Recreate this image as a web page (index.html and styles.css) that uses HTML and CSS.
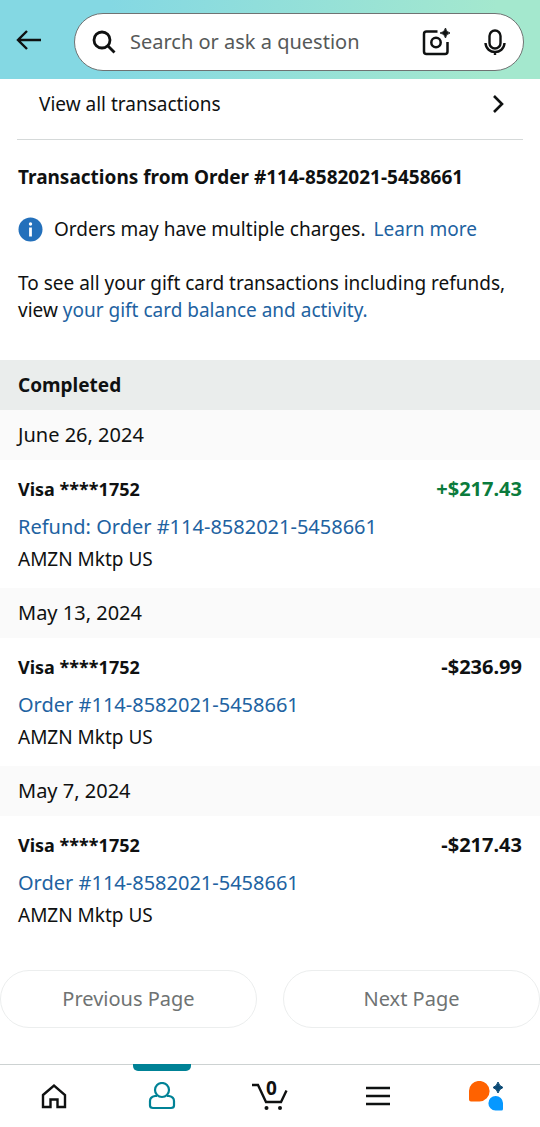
FILE: index.html
```html
<!DOCTYPE html>
<html lang="en">
<head>
<meta charset="utf-8">
<meta name="viewport" content="width=device-width, initial-scale=1">
<title>Transactions</title>
<link rel="stylesheet" href="styles.css">
</head>
<body>
<header class="topbar">
  <button class="icon-btn back" type="button" aria-label="Back">
    <svg width="26" height="22" viewBox="0 0 26 22" fill="none" stroke="#0f1111" stroke-width="2.4"><path d="M25 11H2M11 2L2 11l9 9"/></svg>
  </button>
  <form class="search">
    <svg width="24" height="24" viewBox="0 0 24 24" fill="none" stroke="#0f1111" stroke-width="2.8"><circle cx="10" cy="10" r="8"/><path d="M15.500 15.500L22.500 22.500"/></svg>
    <input class="search-input" type="text" aria-label="Search" placeholder="Search or ask a question">
    <button class="icon-btn" type="button" aria-label="Camera search">
      <svg width="28" height="28" viewBox="0 0 28 28" fill="none" stroke="#0f1111" stroke-width="2.500"><path d="M15.500 3.500H4.500Q2 3.500 2 6V23.500Q2 26 4.500 26H23Q25.500 26 25.500 23.500V14"/><circle cx="14" cy="14.500" r="4.700"/><path d="M23.500 0Q24 4.500 28.500 5Q24 5.500 23.500 10Q22.500 5.500 18 5Q22.500 4.500 23.500 0Z" fill="#0f1111" stroke="#0f1111" stroke-width=".8"/></svg>
    </button>
    <button class="icon-btn" type="button" aria-label="Voice search">
      <svg width="22" height="26" viewBox="0 0 22 26" fill="none" stroke="#0f1111" stroke-width="2.400"><rect x="5.500" y="1.500" width="11" height="18" rx="5.500"/><path d="M1.500 14C2 26 20 26 20.500 14M11 22.500V26"/></svg>
    </button>
  </form>
</header>
<main>
  <a class="view-all" href="#all">View all transactions
    <svg width="12" height="18" viewBox="0 0 12 18" fill="none" stroke="#0f1111" stroke-width="2.600"><path d="M2 1l8 8-8 8"/></svg>
  </a>
  <section class="intro">
    <h1 class="title">Transactions from Order #114-8582021-5458661</h1>
    <p class="notice">
      <svg class="info" width="25" height="25" viewBox="0 0 25 25"><circle cx="12.500" cy="12.500" r="12" fill="#2370bb"/><circle cx="12.500" cy="7" r="1.700" fill="#fff"/><path d="M12.500 10.500V19.500" stroke="#fff" stroke-width="2.800"/></svg>
      <span>Orders may have multiple charges.</span>
      <a class="link" href="#learn">Learn more</a>
    </p>
    <p class="gift">To see all your gift card transactions including refunds, view <a class="link" href="#balance">your gift card balance and activity.</a></p>
  </section>
  <h2 class="status">Completed</h2>
  <section>
    <h3 class="date">June 26, 2024</h3>
    <div class="entry">
      <div class="payment"><span class="card">Visa ****1752</span><span class="credit">+$217.43</span></div>
      <a class="link" href="#o1">Refund: Order #114-8582021-5458661</a>
      <p class="merchant">AMZN Mktp US</p>
    </div>
  </section>
  <section>
    <h3 class="date">May 13, 2024</h3>
    <div class="entry">
      <div class="payment"><span class="card">Visa ****1752</span><span>-$236.99</span></div>
      <a class="link" href="#o2">Order #114-8582021-5458661</a>
      <p class="merchant">AMZN Mktp US</p>
    </div>
  </section>
  <section>
    <h3 class="date">May 7, 2024</h3>
    <div class="entry">
      <div class="payment"><span class="card">Visa ****1752</span><span>-$217.43</span></div>
      <a class="link" href="#o3">Order #114-8582021-5458661</a>
      <p class="merchant">AMZN Mktp US</p>
    </div>
  </section>
  <div class="pager">
    <button class="page-btn" type="button" disabled>Previous Page</button>
    <button class="page-btn" type="button" disabled>Next Page</button>
  </div>
</main>
<nav class="tabs" aria-label="Main">
  <a class="tab" href="#home" aria-label="Home">
    <svg width="26" height="26" viewBox="0 0 26 26" fill="none" stroke="#0f1111" stroke-width="2.400"><path d="M2 12L13 2.500l11 9.500V24H16.500V16.500H9.500V24H2Z"/></svg>
  </a>
  <a class="tab active" href="#account" aria-label="Account">
    <svg width="28" height="28" viewBox="0 0 28 28" fill="none" stroke="#008296" stroke-width="2.200"><path d="M9 14H7Q2 15 2 19V23.500Q2 26 5 26H23Q26 26 26 23.500V19Q26 15 21 14H19"/><circle cx="14" cy="8" r="7"/></svg>
  </a>
  <a class="tab" href="#cart" aria-label="Cart, 0 items">
    <svg width="36" height="28" viewBox="0 0 36 28" fill="none" stroke="#0f1111" stroke-width="2.400"><path d="M0 3H6L14 20H29L34.500 8.500"/><circle cx="14.500" cy="26" r="2" fill="#0f1111" stroke="none"/><circle cx="28" cy="26" r="2" fill="#0f1111" stroke="none"/></svg>
    <span class="count">0</span>
  </a>
  <a class="tab" href="#menu" aria-label="Menu">
    <svg width="26" height="22" viewBox="0 0 26 22" stroke="#0f1111" stroke-width="2.400"><path d="M1 3H25M1 11H25M1 19H25"/></svg>
  </a>
  <a class="tab" href="#assistant" aria-label="Assistant">
    <svg width="34" height="30" viewBox="0 0 34 30"><path d="M0 10.500A10.300 10.300 0 1 1 10.500 20.500H2Q0 20.500 0 18.500Z" fill="#ff6200"/><path d="M34 22A7.300 7.300 0 1 0 26.500 29.500H32.500Q34 29.500 34 28Z" fill="#0698ff"/><path d="M29 1Q30 5 34 6.500Q30 8 29 12Q28 8 24 6.500Q28 5 29 1Z" fill="#0b4a75" stroke="#0b4a75"/></svg>
  </a>
</nav>
</body>
</html>
```

FILE: styles.css
```css
* { box-sizing: border-box; }
body {
  margin: 0;
  min-height: 100vh;
  display: flex;
  flex-direction: column;
  background: #fff;
  color: #0f1111;
  font-family: "Noto Sans", "Open Sans", sans-serif;
  font-size: 20px;
  line-height: 26px;
}
h1, h2, h3, p { margin: 0; font-size: inherit; }
a { color: inherit; text-decoration: none; }
svg { display: block; flex: none; }
.link { color: #2162a1; }
.icon-btn { padding: 0; border: 0; background: none; }
.back { padding-bottom: 4px; }
.topbar {
  display: flex;
  align-items: center;
  gap: 32px;
  padding: 13px 16px 8px;
  background: linear-gradient(100deg, #84d8e3 20%, #a4e8ce 90%);
}
.search {
  flex: 1;
  min-width: 0;
  height: 58px;
  display: flex;
  align-items: center;
  gap: 34px;
  padding: 0 17px;
  border: 1px solid #6f7373;
  border-radius: 29px;
  background: #fff;
}
.search-input {
  flex: 1;
  min-width: 0;
  margin-left: -20px;
  padding: 0;
  border: 0;
  outline: 0;
  background: none;
  font: inherit;
}
.search-input::placeholder { color: #565959; opacity: 1; }
.view-all {
  display: flex;
  align-items: center;
  justify-content: space-between;
  margin: 0 17px;
  padding: 12px 19px 22px 22px;
  border-bottom: 1px solid #d5d9d9;
  font-size: 19px;
}
.intro { padding: 24px 18px 36px; font-size: 19px; }
.notice { display: flex; align-items: center; gap: 8px; margin: 26px 0 28px; }
.info { margin-right: 3px; }
.gift { line-height: 27px; }
.status { padding: 12px 18px; background: #eaedec; font-size: 19px; }
.date { padding: 12px 18px; background: #fafafa; font-weight: 400; }
.entry { padding: 16px 18px; }
.payment {
  display: flex;
  justify-content: space-between;
  margin-bottom: 12px;
  font-weight: 700;
}
.card { font-size: 18px; }
.credit { color: #0b7b3c; }
.merchant { margin-top: 6px; font-size: 19px; }
.pager {
  display: grid;
  grid-template-columns: 1fr 1fr;
  gap: 26px;
  padding: 26px 0 36px;
}
.page-btn {
  height: 58px;
  border: 1px solid #eceeee;
  border-radius: 29px;
  background: #fff;
  color: #6f7373;
  font: inherit;
}
.tabs {
  flex: 1;
  display: grid;
  grid-template-columns: repeat(5, 1fr);
  border-top: 1px solid #cdd2d2;
}
.tab { position: relative; display: flex; align-items: center; justify-content: center; }
.active::before {
  content: "";
  position: absolute;
  top: -1px;
  width: 58px;
  height: 7px;
  border-radius: 0 0 5px 5px;
  background: #008296;
}
.count {
  position: absolute;
  top: 10px;
  left: 50%;
  margin-left: -4px;
  font-size: 19px;
  font-weight: 700;
}
```
